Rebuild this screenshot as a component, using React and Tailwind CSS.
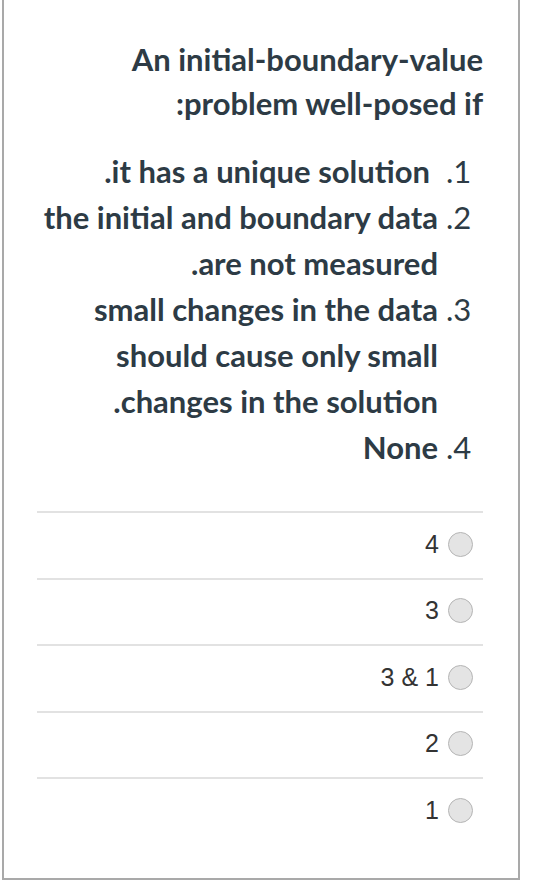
const options = ['4', '3', '1 & 3', '2', '1'];

const App = () => {
  return (
    <div className="bg-white w-[554px] h-[885px]">
      <div
        dir="rtl"
        className="ml-[2px] w-[518px] h-[880px] border-x-2 border-b-2 border-[#a9a9a9] bg-white pt-[37px] pl-[33px] pr-[35px]"
      >
        {/* Question */}
        <p
          className="text-[31px] leading-[44px] font-bold text-[#2d3b45]"
          style={{ fontFamily: 'Lato, "Open Sans", sans-serif' }}
        >
          An initial-boundary-value problem well-posed if:
        </p>

        <ol
          className="mt-[23px] list-decimal pr-[45px] text-[31px] leading-[46px] font-bold text-[#2d3b45] marker:font-normal"
          style={{ fontFamily: 'Lato, "Open Sans", sans-serif' }}
        >
          <li>
            <span className="mr-[8px]">it has a unique solution.</span>
          </li>
          <li>the initial and boundary data are not measured.</li>
          <li>small changes in the data should cause only small changes in the solution.</li>
          <li>None</li>
        </ol>

        {/* Answers */}
        <div className="mt-[41px]">
          {options.map((opt) => (
            <label
              key={opt}
              className="flex h-[66.5px] items-center gap-[9px] border-t-2 border-[#e2e2e2] pr-[10px] pb-[2px]"
            >
              <span className="block w-[25px] h-[25px] rounded-full border border-[#b5b5b5] bg-[#e4e4e4]"></span>
              <span
                className="text-[25px] text-[#333]"
                style={{ fontFamily: '"Liberation Sans", Arial, sans-serif' }}
              >
                {opt}
              </span>
            </label>
          ))}
        </div>
      </div>
    </div>
  );
};

export default App;
